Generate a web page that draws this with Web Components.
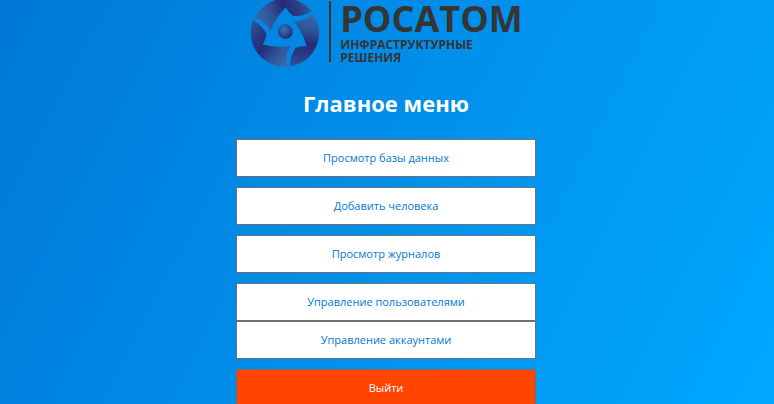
<!DOCTYPE html>
<html lang="ru">
<head>
<meta charset="utf-8">
<meta name="viewport" content="width=device-width, initial-scale=1">
<title>Главное меню</title>
<style>
html { height: 100%; }
body {
  margin: 0;
  height: 100%;
  overflow: hidden;
  background: linear-gradient(117deg, #0078d7, #00a8ff);
  font-family: "Open Sans", "Noto Sans", sans-serif;
}
</style>
</head>
<body>
<main-menu></main-menu>
<script>
class BrandLogo extends HTMLElement {
  constructor() {
    super();
    this.attachShadow({ mode: 'open' }).innerHTML = `
      <style>
        :host { display: flex; padding-left: 2px; color: #373435; font-weight: 700; }
        svg { display: block; flex: none; }
        .bar { width: 2px; height: 61px; margin: 1px 9px 0 10px; background: currentColor; }
        .name { font-size: 36px; line-height: 38px; white-space: nowrap; }
        .sub { font-size: 12px; line-height: 13px; }
      </style>
      <svg width="68" height="68" viewBox="35 0 204 204" aria-hidden="true">
        <defs>
          <linearGradient id="g" gradientUnits="userSpaceOnUse" x1="62" y1="82" x2="212" y2="22">
            <stop offset="0" stop-color="#356ca9"/>
            <stop offset=".28" stop-color="#2f5397"/>
            <stop offset=".55" stop-color="#262b75"/>
            <stop offset=".75" stop-color="#283a84"/>
            <stop offset="1" stop-color="#2d5798"/>
          </linearGradient>
          <radialGradient id="b" cx=".4" cy=".35" r=".65">
            <stop offset="0" stop-color="#3974b2"/>
            <stop offset="1" stop-color="#282b74"/>
          </radialGradient>
          <path id="p" d="M45 56A101 101 0 0 1 217 34Q191 50 161 48Q149 39 139 22Q109 53 93 95C87 77 72 59 45 56Z"/>
        </defs>
        <g fill="url(#g)">
          <use href="#p"/>
          <use href="#p" transform="rotate(120 137 98)"/>
          <use href="#p" transform="rotate(240 137 98)"/>
        </g>
        <circle cx="138" cy="95" r="22" fill="url(#b)"/>
      </svg>
      <div class="bar"></div>
      <div>
        <div class="name">РОСАТОМ</div>
        <div class="sub">ИНФРАСТРУКТУРНЫЕ<br>РЕШЕНИЯ</div>
      </div>`;
  }
}
customElements.define('brand-logo', BrandLogo);

class MenuButton extends HTMLElement {
  constructor() {
    super();
    this.attachShadow({ mode: 'open' }).innerHTML = `
      <style>
        :host { display: block; }
        button {
          display: block; box-sizing: border-box; width: 100%;
          padding: 10px; border: 1px solid #707070;
          background: #fff; color: #0078d7;
          font: 11px/16px "Open Sans", "Noto Sans", sans-serif;
          min-height: 38px; cursor: pointer;
        }
        :host([danger]) button { background: #ff4500; color: #fff; }
      </style>
      <button type="button"><slot></slot></button>`;
  }
}
customElements.define('menu-button', MenuButton);

class MainMenu extends HTMLElement {
  constructor() {
    super();
    this.attachShadow({ mode: 'open' }).innerHTML = `
      <style>
        :host { display: flex; flex-direction: column; align-items: center; padding-right: 2px; }
        h1 { margin: 20px 0; color: #fff; font-size: 22px; line-height: 31px; font-weight: 700; }
        nav { display: flex; flex-direction: column; gap: 10px; width: 300px; max-width: 100%; }
      </style>
      <brand-logo></brand-logo>
      <h1>Главное меню</h1>
      <nav>
        <menu-button>Просмотр базы данных</menu-button>
        <menu-button>Добавить человека</menu-button>
        <menu-button>Просмотр журналов</menu-button>
        <div>
          <menu-button>Управление пользователями</menu-button>
          <menu-button>Управление аккаунтами</menu-button>
        </div>
        <menu-button danger>Выйти</menu-button>
      </nav>`;
  }
}
customElements.define('main-menu', MainMenu);
</script>
</body>
</html>
